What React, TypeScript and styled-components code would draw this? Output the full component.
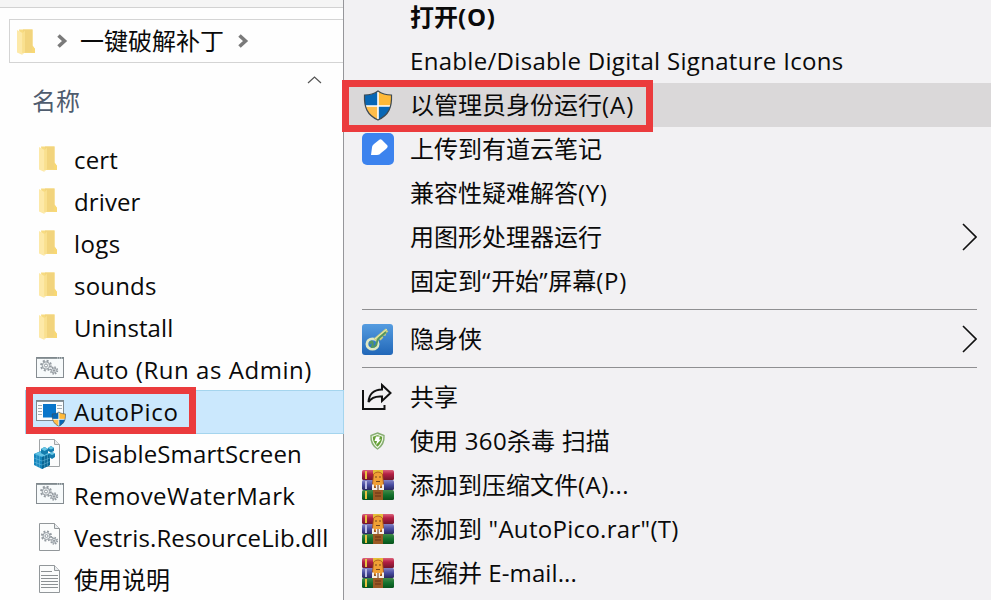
import React from "react";
import styled, { createGlobalStyle } from "styled-components";

const GlobalStyle = createGlobalStyle`
  *, *::before, *::after { box-sizing: border-box; }
  html, body { margin: 0; padding: 0; overflow: hidden; background: #fff; }
`;

const Screen = styled.div`
  display: grid;
  grid-template-columns: 343px 648px;
  width: 991px;
  height: 600px;
  overflow: hidden;
  background: #fefefe;
  color: #0a0a0a;
  font-family: "Open Sans", "Noto Sans CJK SC", sans-serif;
  font-size: 24px;
  line-height: 42px;
  white-space: nowrap;
`;

const Explorer = styled.section`
  display: flex;
  flex-direction: column;
  min-width: 0;
`;

const TopStrip = styled.div`
  flex: none;
  height: 8px;
  background: #f5f5f5;
  border-bottom: 1px solid #d2d2d2;
`;

const AddressBar = styled.div`
  flex: none;
  display: flex;
  align-items: center;
  height: 44px;
  margin: 11px 0 0 9px;
  padding-left: 4px;
  border: 1px solid #d4d4d4;
  border-right: 0;
`;

const Crumb = styled.span`
  margin: 0 14px 0 12px;
`;

const CrumbArrow = styled.svg<{ $gap?: number }>`
  flex: none;
  width: 11px;
  height: 16px;
  margin-left: ${(p) => p.$gap ?? 0}px;
`;

const ColumnHeader = styled.div`
  flex: none;
  display: flex;
  align-items: flex-start;
  justify-content: space-between;
  height: 76px;
  padding: 12px 21px 0 32px;
  color: #4f5c6e;
`;

const HeaderLabel = styled.span`
  padding-top: 5px;
`;

const FileList = styled.ul`
  margin: 0;
  padding: 0;
  list-style: none;
`;

const FileRow = styled.li<{ $selected?: boolean }>`
  position: relative;
  display: flex;
  align-items: center;
  height: 42px;
  margin-left: 26px;
  background: ${(p) => (p.$selected ? "#cbe8fd" : "transparent")};
  box-shadow: ${(p) => (p.$selected ? "0 0 0 1px #a5d5ee" : "none")};
`;

const FileIcon = styled.span`
  flex: none;
  display: flex;
  width: 48px;
  height: 34px;
  padding-left: 10px;
`;

const Label = styled.span<{ $bold?: boolean }>`
  font-weight: ${(p) => (p.$bold ? 700 : 400)};
`;

const Latin = styled.span<{ $track: number }>`
  letter-spacing: ${(p) => p.$track}px;
`;

const Outline = styled.span<{ $x: number; $y: number; $w: number; $h: number }>`
  position: absolute;
  z-index: 2;
  left: ${(p) => p.$x}px;
  top: ${(p) => p.$y}px;
  width: ${(p) => p.$w}px;
  height: ${(p) => p.$h}px;
  border: 7px solid #eb3b3d;
`;

const Menu = styled.nav`
  display: flex;
  flex-direction: column;
  height: 600px;
  border-left: 1px solid #96969a;
  background: #f2f1f3;
`;

const MenuRow = styled.div<{ $active?: boolean; $first?: boolean }>`
  position: relative;
  flex: none;
  display: flex;
  align-items: center;
  height: 44px;
  margin-top: ${(p) => (p.$first ? -5 : 0)}px;
  padding-right: 14px;
  background: ${(p) => (p.$active ? "#dad8d9" : "transparent")};
`;

const MenuIcon = styled.span`
  flex: none;
  display: flex;
  align-items: center;
  width: 66px;
  height: 32px;
  padding-left: 18px;
`;

const SubmenuArrow = styled.svg`
  width: 16px;
  height: 28px;
  margin-left: auto;
`;

const Separator = styled.hr`
  flex: none;
  height: 1px;
  margin: 6px 14px 7px 18px;
  border: 0;
  background: #8f8f91;
`;

const Folder = () => (
  <svg width="24" height="30" viewBox="0 0 24 30">
    <path d="M5 3.5H18.5V19.5L21 23V27H8Z" fill="#f7db81" />
    <path d="M9 3.5H18.5V26.5H9Z" fill="#f2d47d" />
    <path d="M3 4L8.5 7V29L3 26.5Z" fill="#fde9a8" />
    <path d="M8.5 7L11 4.5V26.5L8.5 28Z" fill="#f9e08f" />
    <path d="M18.5 19.5L21 23V27H17.5Z" fill="#f8d875" />
  </svg>
);

const Gears = () => (
  <g fill="none" stroke="#949ba1">
    <circle cx="10" cy="10" r="4.9" strokeWidth="2" strokeDasharray="2 1.85" />
    <circle cx="10" cy="10" r="3.7" fill="#e7ebed" />
    <circle cx="10" cy="10" r="1.5" fill="#fff" />
    <circle cx="18" cy="15" r="3.4" strokeWidth="1.6" strokeDasharray="1.5 1.17" />
    <circle cx="18" cy="15" r="2.5" fill="#e1e6e9" />
    <circle cx="18" cy="15" r=".8" fill="#777" />
  </g>
);

const ScriptIcon = () => (
  <svg width="30" height="32" viewBox="0 0 30 32">
    <rect x="0.5" y="4.5" width="27" height="20" fill="#f7fafb" stroke="#858c91" />
    <path d="M1 5H28" stroke="#7f888d" strokeWidth="1.7" />
    <path d="M21 5H27" stroke="#dce2e5" strokeDasharray="1 1" />
    <g transform="translate(0 2.5)"><Gears /></g>
  </svg>
);

const Page = ({ children }: { children?: React.ReactNode }) => (
  <svg width="30" height="32" viewBox="0 0 30 32">
    <path d="M3.5 2.5H18.5L23.5 7.5V29.5H3.5Z" fill="#fbfcfc" stroke="#92979a" />
    <path d="M18.5 2.5V7.5H23.5" fill="#e9ecee" stroke="#92979a" />
    {children}
  </svg>
);

const DllIcon = () => (
  <Page><g transform="translate(1 5.5) scale(.95)"><Gears /></g></Page>
);

const TextIcon = () => (
  <Page><path d="M5 8.5H16M5 12.5H22M5 15.5H22M5 18.5H22M5 21.5H22M5 24.5H22" stroke="#8c9194" strokeWidth="1" /></Page>
);

const RegistryIcon = () => (
  <svg width="32" height="33" viewBox="0 -1 32 33" overflow="visible">
    <g transform="translate(-2 0)">
      <path d="M5.5 1.5H20.5L25.5 6.5V28.5H5.5Z" fill="#fbfcfc" stroke="#a0a4a6" />
      <path d="M20.5 1.5V6.5H25.5" fill="#e9ecee" stroke="#a0a4a6" />
      <path d="M0 16L7 13L16 16V27L8 31L0 27Z" fill="#1586bd" />
      <path d="M0 16L7 13L16 16L8 19Z" fill="#57bce0" />
      <path d="M8 19L16 16V27L8 31Z" fill="#086694" />
      <path d="M0 20L8 23L16 20M0 24L8 27L16 23.5M2.8 17V28M5.4 18V30M10.7 18V30M13.4 17V28M3 15L11 18M5.5 18L13 15" fill="none" stroke="#8ad2ed" strokeWidth=".4" />
      <path d="M7 11L10.5 9L14 11V15L10.5 17L7 15ZM15 15.5L18 14L21 15.5V19L18 21L15 19ZM14 10L17 8L20 10V13L17 14.5L14 13Z" fill="#147cad" />
      <path d="M7 11L10.5 9L14 11L10.5 13ZM15 15.5L18 14L21 15.5L18 17ZM14 10L17 8L20 10L17 11.5Z" fill="#65c5e5" />
    </g>
  </svg>
);

const shieldPath = "M15 1C19 4 24 5 28.5 5C29 17 26 25 15 30C4 25 1 17 1.5 5C7 5 11 4 15 1Z";

const ShieldQuarters = ({ id }: { id: string }) => (
  <>
    <clipPath id={id}><path d={shieldPath} /></clipPath>
    <g clipPath={`url(#${id})`}>
      <path d="M0 0H15V16H0Z" fill="#0867b5" />
      <path d="M15 0H30V16H15Z" fill="#ffb938" />
      <path d="M0 16H15V31H0Z" fill="#ffbd4a" />
      <path d="M15 16H30V31H15Z" fill="#0867b5" />
      <path d="M15 0V31M0 16H30" stroke="#fff" strokeWidth="1.6" />
    </g>
    <path d={shieldPath} fill="none" stroke="#3f4b53" strokeWidth="1.2" />
  </>
);

const AppIcon = () => (
  <svg width="32" height="32" viewBox="0 0 32 32">
    <rect x=".5" y="5.5" width="27" height="20" fill="#fafcfd" stroke="#7e8990" />
    <path d="M1 6H28" stroke="#7d8990" strokeWidth="1.8" />
    <path d="M2 10.5H6M2 13.5H6M2 16.5H6M2 19.5H6M21 10.5H26M21 13.5H26" stroke="#a2adb3" />
    <rect x="7" y="9" width="13" height="13.5" fill="#0875ca" />
    <g transform="translate(15.5 16.5) scale(.49)"><ShieldQuarters id="appShield" /></g>
  </svg>
);

const AdminShield = () => (
  <svg width="32" height="31" viewBox="-1 0 32 31"><ShieldQuarters id="menuShield" /></svg>
);

const NoteIcon = () => (
  <svg width="32" height="32" viewBox="0 0 32 32">
    <rect width="32" height="32" rx="5" fill="#3c83ee" />
    <path d="M9 22L10 14.5C10 13 11 12 12 11L17 7C18 6 19 6 20 7L25 12C26 13 26 14 24 16L19 20C18 21 17 22 15 22Z" fill="#fff" />
  </svg>
);

const KeyIcon = () => (
  <svg width="31" height="31" viewBox="0 0 31 31">
    <defs><linearGradient id="keyBg" x2="0" y2="1"><stop stopColor="#559ce0" /><stop offset="1" stopColor="#2167b8" /></linearGradient></defs>
    <rect width="31" height="31" rx="3" fill="url(#keyBg)" />
    <ellipse cx="10.5" cy="20" rx="5.6" ry="5.2" fill="none" stroke="#dfe8c4" strokeWidth="2.8" />
    <path d="M13 16L25 6M17 12L20 15M21 9L24 10" fill="none" stroke="#c8cf83" strokeWidth="4" />
    <path d="M8 20C9 16 12 17 10 23C17 23 13 17 17 14L24 8" fill="none" stroke="#55975e" strokeWidth="2" />
    <path d="M13 15L25 5" stroke="#edf0bd" strokeWidth=".8" />
  </svg>
);

const ShareIcon = () => (
  <svg width="31" height="30" viewBox="0 0 31 30" fill="none" stroke="#111" strokeWidth="2">
    <path d="M1 8V27H22.5V23" />
    <path d="M20 3L28.5 11L20 19V14.5C14 14 9 16 6.5 20C7 12 12 7.5 20 7.5Z" />
  </svg>
);

const AntivirusIcon = () => (
  <svg width="32" height="20" viewBox="0 0 32 20">
    <path d="M15.5 2L22 4.5C22.5 11 20 15 15.5 18C11 15 8.5 11 9 4.5Z" fill="#66a038" stroke="#86ad72" strokeWidth="1.4" />
    <path d="M15.5 3.5L20.8 5.5C20.8 11 19 13.7 15.5 16.4C12 13.7 10.2 11 10.2 5.5Z" fill="none" stroke="#edf4e5" strokeWidth="1.2" />
    <path d="M14 5.5H18L17 8.5H19L14 14L15 10H12.5Z" fill="#fff" />
  </svg>
);

const ArchiveIcon = () => (
  <svg width="32" height="30" viewBox="0 0 32 30">
    <defs>
      <linearGradient id="bookRed" x2="0" y2="1"><stop stopColor="#dc647b" /><stop offset=".4" stopColor="#b41f44" /><stop offset="1" stopColor="#72162c" /></linearGradient>
      <linearGradient id="bookBlue" x2="0" y2="1"><stop stopColor="#8484c5" /><stop offset=".5" stopColor="#474b9f" /><stop offset="1" stopColor="#29285f" /></linearGradient>
      <linearGradient id="bookGreen" x2="0" y2="1"><stop stopColor="#438949" /><stop offset=".5" stopColor="#13712c" /><stop offset="1" stopColor="#07531c" /></linearGradient>
    </defs>
    <rect y="0" width="32" height="10" rx="1.5" fill="url(#bookRed)" />
    <rect y="10" width="32" height="10" rx="1.5" fill="url(#bookBlue)" />
    <rect y="20" width="32" height="10" rx="1.5" fill="url(#bookGreen)" />
    <path d="M4 1V9M4 21V29" stroke="#e8c13f" strokeWidth="2" />
    <path d="M4 11V19" stroke="#bdbde3" strokeWidth="2" />
    <path d="M11 0H21V30H11Z" fill="#9b5a24" />
    <path d="M11 0H21V5H11Z" fill="#e5bf38" />
    <path d="M11.5 4Q16 0 20.5 4L21.5 14L19 17H13L10.5 14Z" fill="#f0a035" stroke="#a35018" strokeWidth=".8" />
    <path d="M13 7H15M17 7H19M14 11.5H18" stroke="#76451d" />
    <path d="M10 14.5H12V18H20V14.5H22V20H10Z" fill="#f5eee4" />
    <path d="M14 15H18V20H14Z" fill="#f5eee4" />
    <path d="M16 15V20M13 23H19M13 26H19" stroke="#683114" />
  </svg>
);

const files: { name: string; icon: React.ReactNode; track?: number; selected?: boolean }[] = [
  { name: "cert", icon: <Folder />, track: 0.15 },
  { name: "driver", icon: <Folder />, track: 0.12 },
  { name: "logs", icon: <Folder />, track: 0.4 },
  { name: "sounds", icon: <Folder />, track: 0.2 },
  { name: "Uninstall", icon: <Folder />, track: 0.1 },
  { name: "Auto (Run as Admin)", icon: <ScriptIcon />, track: 0.54 },
  { name: "AutoPico", icon: <AppIcon />, track: 0.65, selected: true },
  { name: "DisableSmartScreen", icon: <RegistryIcon />, track: 0.12 },
  { name: "RemoveWaterMark", icon: <ScriptIcon />, track: 0.42 },
  { name: "Vestris.ResourceLib.dll", icon: <DllIcon />, track: 0.13 },
  { name: "使用说明", icon: <TextIcon /> },
];

type Entry = { text: string; icon?: React.ReactNode; track?: number; bold?: boolean; active?: boolean; submenu?: boolean };

const groups: Entry[][] = [
  [
    { text: "打开(O)", bold: true, track: 0.8 },
    { text: "Enable/Disable Digital Signature Icons", track: 0.31 },
    { text: "以管理员身份运行(A)", icon: <AdminShield />, active: true, track: 1 },
    { text: "上传到有道云笔记", icon: <NoteIcon /> },
    { text: "兼容性疑难解答(Y)", track: 0.6 },
    { text: "用图形处理器运行", submenu: true },
    { text: "固定到“开始”屏幕(P)", track: 0.75 },
  ],
  [{ text: "隐身侠", icon: <KeyIcon />, submenu: true }],
  [
    { text: "共享", icon: <ShareIcon /> },
    { text: "使用 360杀毒 扫描", icon: <AntivirusIcon />, track: 0.4 },
    { text: "添加到压缩文件(A)...", icon: <ArchiveIcon />, track: 0.45 },
    { text: "添加到 \"AutoPico.rar\"(T)", icon: <ArchiveIcon />, track: 0.3 },
    { text: "压缩并 E-mail...", icon: <ArchiveIcon />, track: 0.1 },
  ],
];

/* Tracks only the Latin runs, so the ideographs keep their 24px advance. */
const MixedText = ({ text, track = 0 }: { text: string; track?: number }) => (
  <>
    {text.split(/([^\u4e00-\u9fff]+)/).filter(Boolean).map((run, i) =>
      /[\u4e00-\u9fff]/.test(run) ? run : <Latin key={i} $track={track}>{run}</Latin>
    )}
  </>
);

const Chevron = ({ gap }: { gap?: number }) => (
  <CrumbArrow $gap={gap} viewBox="0 0 11 16">
    <path d="M1.5 2.5L7.5 8L1.5 13.5" fill="none" stroke="#7a7a7a" strokeWidth="3.6" />
  </CrumbArrow>
);

export default function App() {
  return (
    <>
      <GlobalStyle />
      <Screen>
        <Explorer>
          <TopStrip />
          <AddressBar>
            <Folder />
            <Chevron gap={19} />
            <Crumb>一键破解补丁</Crumb>
            <Chevron />
          </AddressBar>
          <ColumnHeader>
            <HeaderLabel>名称</HeaderLabel>
            <svg width="15" height="10" viewBox="0 0 15 10"><path d="M1 8L7.5 2L14 8" fill="none" stroke="#555" strokeWidth="1.2" /></svg>
          </ColumnHeader>
          <FileList>
            {files.map((f) => (
              <FileRow key={f.name} $selected={f.selected}>
                <FileIcon>{f.icon}</FileIcon>
                <Label><MixedText text={f.name} track={f.track} /></Label>
                {f.selected && <Outline $x={0} $y={-4} $w={170} $h={47} />}
              </FileRow>
            ))}
          </FileList>
        </Explorer>
        <Menu>
          {groups.map((group, g) => (
            <React.Fragment key={g}>
              {g > 0 && <Separator />}
              {group.map((e, i) => (
                <MenuRow key={e.text} $first={g === 0 && i === 0} $active={e.active}>
                  <MenuIcon>{e.icon}</MenuIcon>
                  <Label $bold={e.bold}><MixedText text={e.text} track={e.track} /></Label>
                  {e.submenu && (
                    <SubmenuArrow viewBox="0 0 16 28"><path d="M2 1L15 14L2 27" fill="none" stroke="#111" strokeWidth="1.6" /></SubmenuArrow>
                  )}
                  {e.active && <Outline $x={-2} $y={-3} $w={311} $h={52} />}
                </MenuRow>
              ))}
            </React.Fragment>
          ))}
        </Menu>
      </Screen>
    </>
  );
}
